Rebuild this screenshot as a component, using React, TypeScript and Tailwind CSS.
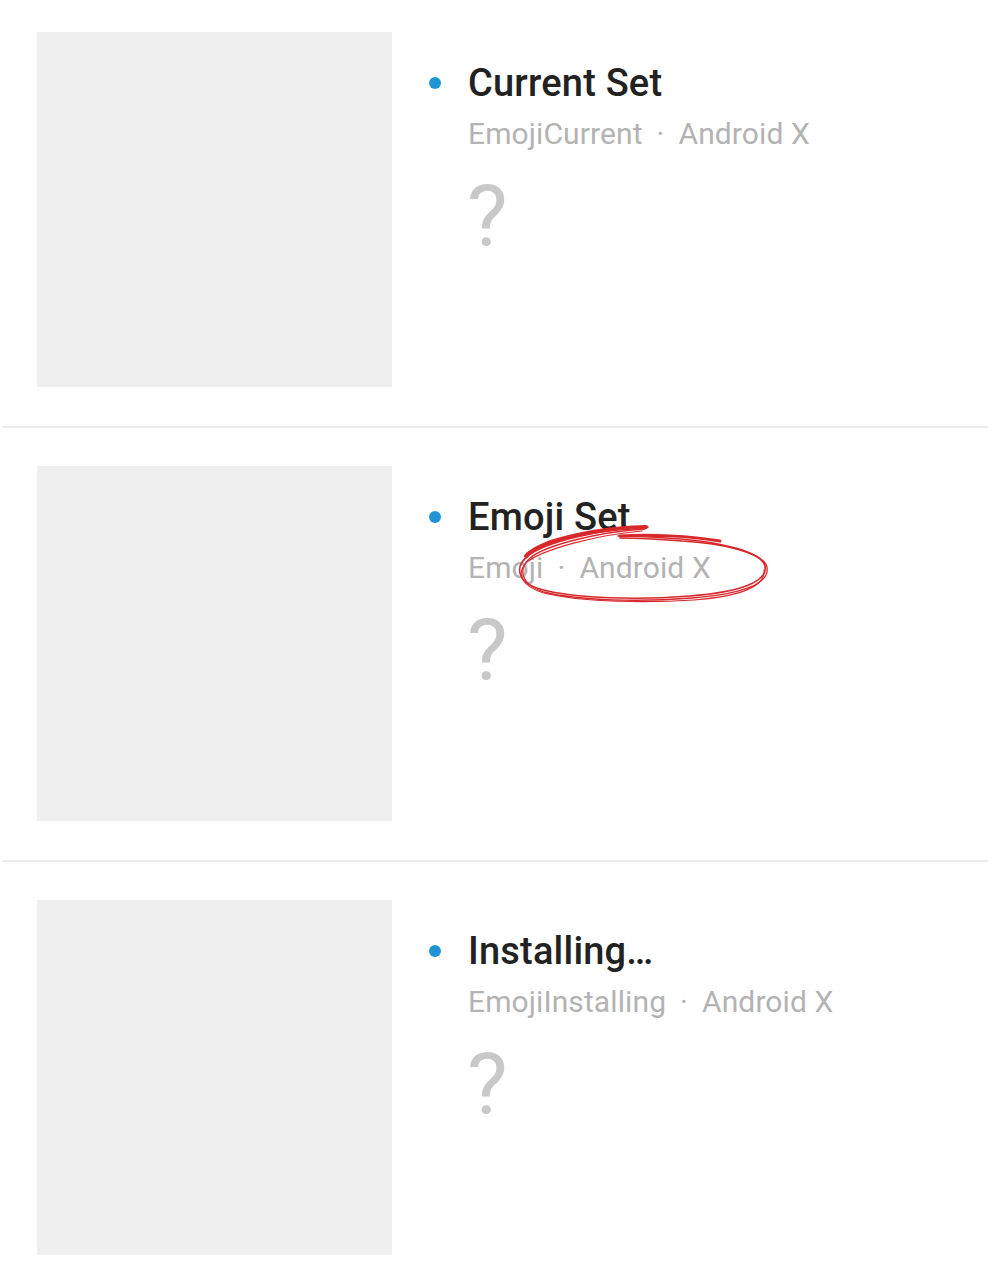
import React from "react";

type Item = { title: string; subtitle: string };

const items: Item[] = [
  { title: "Current Set", subtitle: "EmojiCurrent" },
  { title: "Emoji Set", subtitle: "Emoji" },
  { title: "Installing…", subtitle: "EmojiInstalling" },
];

function Row({ item, first }: { item: Item; first: boolean }) {
  return (
    <div className={`flex pl-[37px] ${first ? "pt-[32px]" : "pt-[38px]"} pb-[39px]`}>
      <div className="w-[355px] h-[355px] bg-[#efefef] shrink-0" />
      <div className="flex flex-col pl-[37px] pt-[29px]">
        <div className="flex items-center h-[44px]">
          <span className="w-[12px] h-[12px] rounded-full bg-[#2094d6] shrink-0" />
          <span className="ml-[27px] text-[38px] leading-[44px] tracking-[0.2px] font-medium text-[#222222] whitespace-nowrap">
            {item.title}
          </span>
        </div>
        <div className="pl-[39px] mt-[12px] text-[30px] leading-[34px] tracking-[0.1px] text-[#b3b3b3] whitespace-nowrap">
          {item.subtitle}
          <span className="mx-[14px]">·</span>
          Android X
        </div>
        <div className="pl-[38px] mt-[23px] text-[86px] leading-[86px] text-[#c8c8c8]">?</div>
      </div>
    </div>
  );
}

export default function App() {
  return (
    <div
      className="relative w-[988px] h-[1280px] bg-white overflow-hidden"
      style={{ fontFamily: "Roboto, 'Noto Sans', sans-serif" }}
    >
      {items.map((it, i) => (
        <React.Fragment key={i}>
          <Row item={it} first={i === 0} />
          {i < items.length - 1 && <div className="ml-[2px] h-[2px] bg-[#ebebeb]" />}
        </React.Fragment>
      ))}
      <svg
        className="absolute left-0 top-0 pointer-events-none"
        width="988"
        height="1280"
        viewBox="0 0 988 1280"
        fill="none"
      >
        <path
          d="M648 527 C600 529 545 542 528 556 C515 566 516 582 540 589 C575 599 640 600 690 596 C740 592 768 582 765 566 C762 552 720 542 680 539 C655 537 632 536 618 536"
          stroke="#d8282b"
          strokeWidth="1.6"
          strokeLinecap="round"
        />
        <path
          d="M645 529 C598 532 546 545 530 558 C518 569 520 584 544 592 C580 601 642 602 692 598 C742 594 770 584 767 567 C764 553 722 543 682 541 C657 539 634 538 620 538"
          stroke="#d8282b"
          strokeWidth="1.3"
          strokeLinecap="round"
        />
        <path
          d="M642 531 C596 535 544 549 527 562 C516 573 520 587 548 594 C585 602 645 603 694 600 C744 596 766 585 764 570"
          stroke="#d8282b"
          strokeWidth="1.1"
          strokeLinecap="round"
        />
        <path
          d="M646 527 C612 528 575 534 548 543 C538 547 530 551 526 556"
          stroke="#d8282b"
          strokeWidth="4"
          strokeLinecap="round"
        />
        <path
          d="M620 536 C650 534 690 536 720 541"
          stroke="#d8282b"
          strokeWidth="3"
          strokeLinecap="round"
        />
      </svg>
    </div>
  );
}
